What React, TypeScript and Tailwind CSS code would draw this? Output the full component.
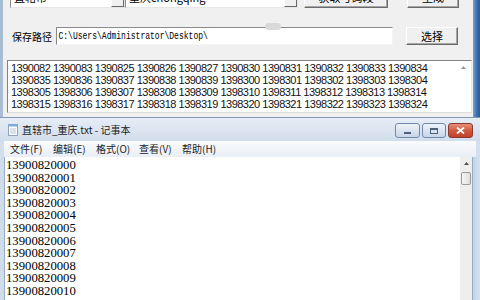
import React from "react";

const rows = [
  "1390082 1390083 1390825 1390826 1390827 1390830 1390831 1390832 1390833 1390834",
  "1390835 1390836 1390837 1390838 1390839 1398300 1398301 1398302 1398303 1398304",
  "1398305 1398306 1398307 1398308 1398309 1398310 1398311 1398312 1398313 1398314",
  "1398315 1398316 1398317 1398318 1398319 1398320 1398321 1398322 1398323 1398324",
];

const nums = Array.from({ length: 11 }, (_, i) => "139008200" + String(i).padStart(2, "0"));

const cjk = "font-['Noto_Sans_CJK_SC','Liberation_Sans',sans-serif]";

function DownArrow() {
  return (
    <svg width="7" height="4" viewBox="0 0 7 4">
      <path d="M0 0 L7 0 L3.5 4 Z" fill="#333" />
    </svg>
  );
}

function Combo({ w, text }: { w: string; text: string }) {
  return (
    <div className={`${w} h-[21px] bg-white border border-t-[#8a8a8a] border-l-[#8a8a8a] border-r-[#e6e6e6] border-b-[#e6e6e6] flex`}>
      <span className={`flex-1 pl-[3px] text-[11px] leading-[19px] text-black ${cjk}`}>{text}</span>
      <div className="w-[13px] h-full bg-[#f0f0f0] border border-t-white border-l-white border-r-[#696969] border-b-[#696969] flex items-center justify-center">
        <DownArrow />
      </div>
    </div>
  );
}

function Btn({ w, h, label, cls = "" }: { w: string; h: string; label: string; cls?: string }) {
  return (
    <div
      className={`${w} ${h} ${cls} bg-[#f0f0f0] border border-t-white border-l-white border-r-[#6b6b6b] border-b-[#6b6b6b] shadow-[inset_-1px_-1px_0_#a6a6a6] flex items-center justify-center text-[11px] text-black ${cjk}`}
    >
      {label}
    </div>
  );
}

export default function App() {
  return (
    <div className="w-[480px] h-[300px] overflow-hidden flex flex-col bg-[#f0f0f0]">
      {/* Top dialog */}
      <div className="h-[117px] shrink-0 flex">
        <div className="w-[3px] bg-[#a9bdd2]" />
        <div className="flex-1 flex flex-col bg-[#f0f0f0] relative overflow-hidden">
          {/* row 1 */}
          <div className="flex items-end h-[22px] -mt-[14px] pl-[7px] shrink-0">
            <Combo w="w-[115px]" text="直辖市" />
            <Combo w="w-[173px]" text="重庆chongqing" />
            <Btn w="w-[84px]" h="h-[22px]" label="获取号码段" cls="ml-[6px]" />
            <Btn w="w-[52px]" h="h-[22px]" label="生成" cls="ml-[19px]" />
          </div>
          {/* row 2 */}
          <div className="flex items-center mt-[19px] h-[18px] shrink-0">
            <span className={`ml-[9px] w-[44px] text-[10px] text-black ${cjk}`}>保存路径</span>
            <div className="w-[337px] h-[18px] bg-white border border-t-[#8a8a8a] border-l-[#8a8a8a] border-r-[#f4f4f4] border-b-[#f4f4f4] flex items-center overflow-hidden">
              <span className="inline-block origin-left scale-x-[0.73] pl-[2px] text-[11px] leading-[16px] text-black font-['Liberation_Mono',monospace] whitespace-nowrap">
                C:\Users\Administrator\Desktop\
              </span>
            </div>
            <Btn w="w-[52px]" h="h-[18px]" label="选择" cls="ml-[13px]" />
          </div>
          <div className="absolute left-[262px] top-[23px] w-[16px] h-[7px] rounded-full bg-[#d9d9d9]" />
          {/* list */}
          <div className="mt-[15px] ml-[4px] mr-[1px] h-[53px] shrink-0 bg-white border border-t-[#828282] border-l-[#828282] border-r-[#e8e8e8] border-b-[#dcdcdc] flex">
            <div className="flex-1 pl-[3px] pt-[1px] overflow-hidden">
              {rows.map((r) => (
                <div
                  key={r}
                  className="text-[11px] leading-[12px] tracking-[-0.5px] text-[#111] whitespace-nowrap font-['Liberation_Sans',sans-serif]"
                >
                  {r}
                </div>
              ))}
            </div>
            <div className="w-[15px] flex justify-center pt-[5px]">
              <svg width="5" height="3" viewBox="0 0 5 3">
                <path d="M0 3 L5 3 L2.5 0 Z" fill="#9a9a9a" />
              </svg>
            </div>
          </div>
        </div>
        <div className="w-[7px] bg-gradient-to-r from-[#7aa3d3] via-[#3f72b2] to-[#275894]" />
      </div>

      {/* Notepad window */}
      <div className="flex-1 flex flex-col border-t border-[#8397b0] bg-[#d3dfec]">
        {/* title bar */}
        <div className="h-[23px] shrink-0 flex bg-gradient-to-b from-[#e6edf6] to-[#d2ddeb]">
          <div className="flex items-center pl-[8px]">
            <svg width="10" height="12" viewBox="0 0 10 12">
              <rect x="0.5" y="0.5" width="9" height="11" fill="#fdfdfd" stroke="#8ea3bd" />
              <rect x="0.5" y="0.5" width="9" height="2" fill="#7eaee0" />
              <line x1="2" y1="5" x2="8" y2="5" stroke="#b8c6d6" />
              <line x1="2" y1="7" x2="8" y2="7" stroke="#b8c6d6" />
              <line x1="2" y1="9" x2="8" y2="9" stroke="#b8c6d6" />
            </svg>
            <span className={`ml-[4px] text-[10px] text-[#1c1c1c] ${cjk}`}>直辖市_重庆.txt - 记事本</span>
          </div>
          <div className="ml-auto mr-[7px] mt-[5px] flex gap-[2px]">
            <div className="w-[25px] h-[15px] rounded-[3px] border border-[#7089ab] bg-gradient-to-b from-[#eef3fa] to-[#c7d6e8] flex items-end justify-center pb-[3px]">
              <div className="w-[7px] h-[2px] bg-[#4c607a]" />
            </div>
            <div className="w-[24px] h-[15px] rounded-[3px] border border-[#7089ab] bg-gradient-to-b from-[#eef3fa] to-[#c7d6e8] flex items-center justify-center">
              <div className="w-[8px] h-[6px] border border-[#4c607a] border-t-2" />
            </div>
            <div className="w-[25px] h-[15px] rounded-[3px] border border-[#8c3a2c] bg-gradient-to-b from-[#e6907c] via-[#d15a41] to-[#c2412b] flex items-center justify-center">
              <svg width="9" height="7" viewBox="0 0 9 7">
                <path d="M1 0.5 L8 6.5 M8 0.5 L1 6.5" stroke="#fff" strokeWidth="1.8" />
              </svg>
            </div>
          </div>
        </div>
        {/* menu bar */}
        <div className="h-[16px] shrink-0 mx-[4px] flex items-center bg-gradient-to-b from-[#fafbfd] to-[#e9eef5] pl-[6px]">
          {["文件(F)", "编辑(E)", "格式(O)", "查看(V)", "帮助(H)"].map((m) => (
            <span key={m} className={`w-[43px] text-[10px] leading-[16px] text-[#1c1c1c] whitespace-nowrap ${cjk}`}>
              {m}
            </span>
          ))}
        </div>
        {/* body */}
        <div className="flex-1 flex min-h-0">
          <div className="w-[5px] bg-[#d0dcea] border-r border-[#97abc4]" />
          <div className="flex-1 bg-white pl-[1px] pt-[2px] overflow-hidden">
            {nums.map((n) => (
              <div key={n} className="text-[12.7px] leading-[12.6px] text-black font-['Liberation_Serif',serif]">
                {n}
              </div>
            ))}
          </div>
          <div className="w-[12px] bg-[#eeeeee] flex flex-col items-center">
            <div className="h-[12px] w-full flex items-center justify-center">
              <svg width="5" height="3" viewBox="0 0 5 3">
                <path d="M0 3 L5 3 L2.5 0 Z" fill="#505050" />
              </svg>
            </div>
            <div className="mt-[3px] w-[10px] h-[13px] rounded-[2px] border border-[#9b9b9b] bg-gradient-to-r from-[#f6f6f6] to-[#dedede]" />
          </div>
          <div className="w-[8px] bg-gradient-to-r from-[#c2d3e8] to-[#d6e2ef] border-l border-[#97abc4]" />
        </div>
      </div>
    </div>
  );
}
